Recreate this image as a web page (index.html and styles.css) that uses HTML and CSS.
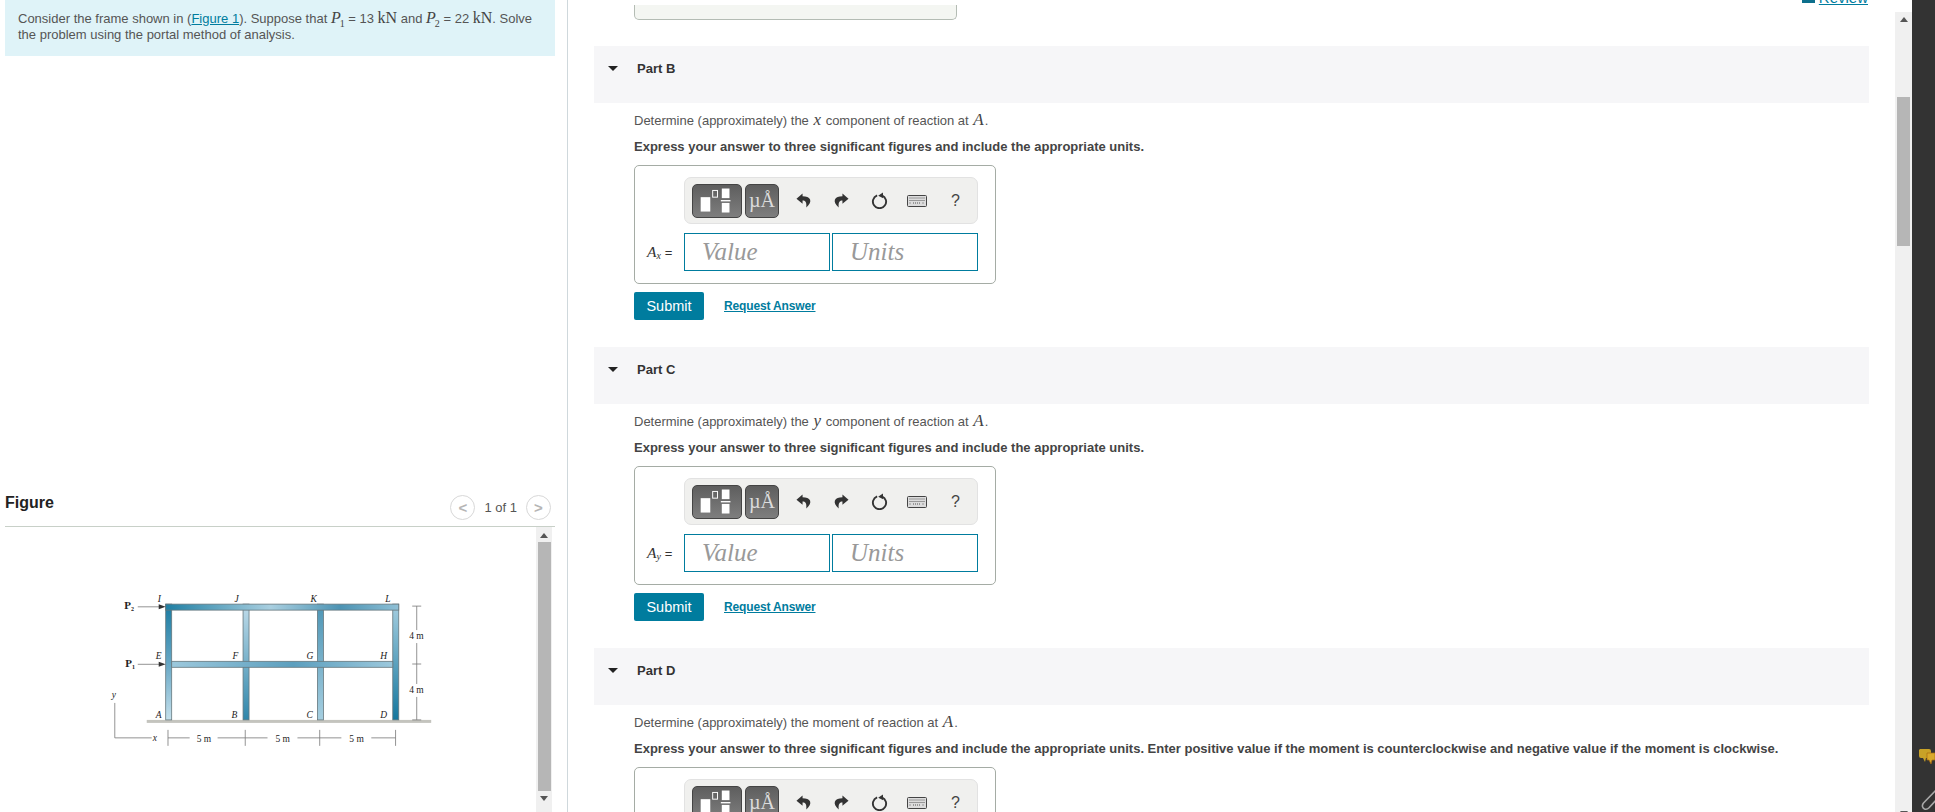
FILE: index.html
```html
<!DOCTYPE html>
<html lang="en">
<head>
  <meta charset="UTF-8" />
  <title>Portal method - Parts B to D</title>
  <link rel="stylesheet" href="styles.css">
</head>
<body>

  <svg class="defs">
    <defs>
      <linearGradient id="beamTop" x1="0" x2="1" y1="0" y2="0">
        <stop offset="0" stop-color="#1f7fa3" />
        <stop offset="0.45" stop-color="#a9cfe0" />
        <stop offset="0.75" stop-color="#4c93b3" />
        <stop offset="1" stop-color="#8fc0d6" />
      </linearGradient>
      <linearGradient id="beamMid" x1="0" x2="1" y1="0" y2="0">
        <stop offset="0" stop-color="#9cc8dc" />
        <stop offset="0.55" stop-color="#5c9fbe" />
        <stop offset="1" stop-color="#9cc8dc" />
      </linearGradient>
      <linearGradient id="colA" x1="0" x2="0" y1="0" y2="1">
        <stop offset="0" stop-color="#1a7ba1" />
        <stop offset="0.5" stop-color="#65a6c4" />
        <stop offset="1" stop-color="#c5e0ec" />
      </linearGradient>
      <linearGradient id="colB" x1="0" x2="0" y1="0" y2="1">
        <stop offset="0" stop-color="#c0dcea" />
        <stop offset="1" stop-color="#2f86aa" />
      </linearGradient>
      <linearGradient id="colC" x1="0" x2="0" y1="0" y2="1">
        <stop offset="0" stop-color="#4d95b5" />
        <stop offset="1" stop-color="#a5cee0" />
      </linearGradient>
      <linearGradient id="colD" x1="0" x2="0" y1="0" y2="1">
        <stop offset="0" stop-color="#a5cee0" />
        <stop offset="1" stop-color="#15779e" />
      </linearGradient>

      <symbol id="i-undo" viewBox="0 0 16 16">
        <path d="M7 0.500 L0.500 6 L7 11.500 V8 C10 8 11.500 9.500 11 15.500 C14.500 12.500 16 9.500 15 7 C14 4.500 11 3.500 7 3.500 Z" />
      </symbol>
      <symbol id="i-redo" viewBox="0 0 16 16">
        <path d="M9 0.500 L15.500 6 L9 11.500 V8 C6 8 4.500 9.500 5 15.500 C1.500 12.500 0 9.500 1 7 C2 4.500 5 3.500 9 3.500 Z" />
      </symbol>
      <symbol id="i-reset" viewBox="0 0 18 18">
        <path class="reset-arc" d="M6.500 3.600 A7 7 0 1 0 11.500 3.600" />
        <path d="M12.600 0.400 L12.900 6.600 L7.600 3.900 Z" />
      </symbol>
      <symbol id="i-keys" viewBox="0 0 20 12">
        <rect class="key-case" x="0.500" y="0.500" width="19" height="11" rx="1" />
        <path class="key-dots" d="M2.500 3h15M2.500 5.500h15M2.500 8h2M6 8h8M15.500 8h2" />
      </symbol>
      <symbol id="i-templ" viewBox="0 0 50 34">
        <rect x="8" y="13" width="10" height="15" fill="#fff" />
        <rect x="20.500" y="6" width="5" height="7" fill="none" stroke="#fff" stroke-width="1" />
        <rect x="30" y="4" width="8" height="10" fill="#fff" />
        <rect x="29" y="16" width="10" height="1.400" fill="#fff" />
        <rect x="30" y="19" width="8" height="10" fill="#fff" />
      </symbol>
    </defs>
  </svg>

  <div class="page">

    <!-- left: problem statement and figure -->
    <aside class="left">
      <div class="intro">
        Consider the frame shown in (<a href="#">Figure 1</a>). Suppose that
        <span class="m"><i>P</i><sub>1</sub></span> = 13 <span class="m">kN</span> and
        <span class="m"><i>P</i><sub>2</sub></span> = 22 <span class="m">kN</span>. Solve<br>
        the problem using the portal method of analysis.
      </div>

      <div class="fig-head">
        <h2>Figure</h2>
        <div class="fig-nav">
          <span class="circle">&lt;</span>
          <span class="fig-count">1 of 1</span>
          <span class="circle">&gt;</span>
        </div>
      </div>

      <div class="fig-body">
        <svg class="frame" width="532" height="285" viewBox="5 527 532 285">
          <rect class="ground" x="147" y="720" width="285" height="3" />

          <rect x="166" y="604" width="6" height="116" fill="url(#colA)" class="member" />
          <rect x="243.500" y="604" width="6" height="116" fill="url(#colB)" class="member" />
          <rect x="318" y="604" width="6" height="116" fill="url(#colC)" class="member" />
          <rect x="393.500" y="604" width="6" height="116" fill="url(#colD)" class="member" />
          <rect x="166" y="604" width="233.500" height="6" fill="url(#beamTop)" class="member" />
          <rect x="172" y="661.300" width="221.500" height="6" fill="url(#beamMid)" class="member" />

          <g class="lines">
            <path d="M138 606.700H160M138 664.300H160" />
            <path d="M115 703V738H152" />
            <path d="M168.300 730V746M245.700 730V746M320.300 730V746M396.300 730V746" />
            <path d="M168.300 738H190M218 738H245.700M245.700 738H268M298 738H320.300M320.300 738H342M372 738H396.300" />
            <path d="M417.500 606V630M417.500 643V684M417.500 697V720M413 606H422M413 664H422M413 720H422" />
          </g>
          <path class="head" d="M166 606.700l-7-2.500v5zM166 664.300l-7-2.500v5z" />

          <g class="lbl-i">
            <text x="158" y="602">I</text>
            <text x="235" y="602">J</text>
            <text x="311" y="602">K</text>
            <text x="386" y="602">L</text>
            <text x="156" y="659">E</text>
            <text x="233" y="659">F</text>
            <text x="307" y="659">G</text>
            <text x="381" y="659">H</text>
            <text x="156" y="718">A</text>
            <text x="232" y="718">B</text>
            <text x="307" y="718">C</text>
            <text x="381" y="718">D</text>
            <text x="112" y="698">y</text>
            <text x="153" y="741">x</text>
          </g>
          <g class="lbl-b">
            <text x="124.500" y="609">P<tspan class="lbl-sub" dy="2">2</tspan></text>
            <text x="125.500" y="667">P<tspan class="lbl-sub" dy="2">1</tspan></text>
          </g>
          <g class="lbl-r">
            <text x="197" y="742">5 m</text>
            <text x="276" y="742">5 m</text>
            <text x="350" y="742">5 m</text>
            <text x="410" y="639">4 m</text>
            <text x="410" y="693">4 m</text>
          </g>
        </svg>
        <div class="vscroll small">
          <span class="arr up"></span>
          <span class="thumb"></span>
          <span class="arr down"></span>
        </div>
      </div>
    </aside>

    <!-- right: the question parts -->
    <main class="right">
      <div class="review-row">
        <span class="review-icon"></span>
        <a href="#">Review</a>
      </div>
      <div class="stub"></div>

      <section class="part">
        <div class="part-head"><span class="caret"></span>Part B</div>
        <p>Determine (approximately) the <span class="m"><i>x</i></span> component of reaction at <span class="m"><i>A</i></span>.</p>
        <p class="strong">Express your answer to three significant figures and include the appropriate units.</p>
        <div class="answer-box">
          <div class="toolbar">
            <span class="tool wide"><svg width="50" height="34"><use href="#i-templ" /></svg></span>
            <span class="tool mu">&micro;&Aring;</span>
            <svg class="tb-icon undo"><use href="#i-undo" /></svg>
            <svg class="tb-icon redo"><use href="#i-redo" /></svg>
            <svg class="tb-icon reset"><use href="#i-reset" /></svg>
            <svg class="tb-keys"><use href="#i-keys" /></svg>
            <span class="tb-help">?</span>
          </div>
          <label class="ans-label"><i>A</i><sub><i>x</i></sub> <span class="eq">=</span></label>
          <div class="inputs">
            <input type="text" placeholder="Value" />
            <input type="text" placeholder="Units" />
          </div>
        </div>
        <div class="actions">
          <button type="button">Submit</button>
          <a href="#">Request Answer</a>
        </div>
      </section>

      <section class="part">
        <div class="part-head"><span class="caret"></span>Part C</div>
        <p>Determine (approximately) the <span class="m"><i>y</i></span> component of reaction at <span class="m"><i>A</i></span>.</p>
        <p class="strong">Express your answer to three significant figures and include the appropriate units.</p>
        <div class="answer-box">
          <div class="toolbar">
            <span class="tool wide"><svg width="50" height="34"><use href="#i-templ" /></svg></span>
            <span class="tool mu">&micro;&Aring;</span>
            <svg class="tb-icon undo"><use href="#i-undo" /></svg>
            <svg class="tb-icon redo"><use href="#i-redo" /></svg>
            <svg class="tb-icon reset"><use href="#i-reset" /></svg>
            <svg class="tb-keys"><use href="#i-keys" /></svg>
            <span class="tb-help">?</span>
          </div>
          <label class="ans-label"><i>A</i><sub><i>y</i></sub> <span class="eq">=</span></label>
          <div class="inputs">
            <input type="text" placeholder="Value" />
            <input type="text" placeholder="Units" />
          </div>
        </div>
        <div class="actions">
          <button type="button">Submit</button>
          <a href="#">Request Answer</a>
        </div>
      </section>

      <section class="part">
        <div class="part-head"><span class="caret"></span>Part D</div>
        <p>Determine (approximately) the moment of reaction at <span class="m"><i>A</i></span>.</p>
        <p class="strong">Express your answer to three significant figures and include the appropriate units. Enter positive value if the moment is counterclockwise and negative value if the moment is clockwise.</p>
        <div class="answer-box">
          <div class="toolbar">
            <span class="tool wide"><svg width="50" height="34"><use href="#i-templ" /></svg></span>
            <span class="tool mu">&micro;&Aring;</span>
            <svg class="tb-icon undo"><use href="#i-undo" /></svg>
            <svg class="tb-icon redo"><use href="#i-redo" /></svg>
            <svg class="tb-icon reset"><use href="#i-reset" /></svg>
            <svg class="tb-keys"><use href="#i-keys" /></svg>
            <span class="tb-help">?</span>
          </div>
          <label class="ans-label"><i>M</i><sub><i>A</i></sub> <span class="eq">=</span></label>
          <div class="inputs">
            <input type="text" placeholder="Value" />
            <input type="text" placeholder="Units" />
          </div>
        </div>
      </section>
    </main>

    <div class="vscroll big">
      <span class="arr up"></span>
      <span class="thumb"></span>
      <span class="arr down"></span>
    </div>

    <!-- dark tool strip on the right edge -->
    <div class="strip">
      <svg class="chat" width="16" height="20" viewBox="0 0 16 20">
        <path fill="#c9a227" d="M1 2h9a2 2 0 0 1 2 2v5a2 2 0 0 1-2 2H7l-1 4-2-4H2a2 2 0 0 1-2-2V3z" />
        <path fill="#d9a92a" stroke="#a86a10" stroke-width="0.700" d="M8 6h8v7h-3l-1 4-2-4H8z" />
      </svg>
      <svg class="clip" width="14" height="24" viewBox="0 0 14 24">
        <path fill="none" stroke="#a8a8a8" stroke-width="1.600" d="M15 3L2.500 16c-2 2.500-1 5 1 6 2 .8 3.500-.2 4.500-1.200L16 12" />
      </svg>
    </div>

  </div>

</body>
</html>
```

FILE: styles.css
```css
html, body {
  margin: 0;
  padding: 0;
  height: 100%;
  overflow: hidden;
  background: #fff;
}

body {
  font-family: 'Liberation Sans', Arial, sans-serif;
  font-size: 13px;
  color: #555;
}

a {
  color: #007c9e;
}

.defs {
  position: absolute;
  width: 0;
  height: 0;
}

.page {
  display: flex;
  height: 812px;
  overflow: hidden;
}

/* left column */

.left {
  width: 550px;
  flex: none;
  padding: 0 12px 0 5px;
  border-right: 1px solid #cfd8dc;
}

.intro {
  height: 56px;
  box-sizing: border-box;
  padding: 11px 0 0 13px;
  line-height: 16px;
  background: #dff3f8;
}

.m {
  font-family: 'Liberation Serif', serif;
  font-size: 16px;
  line-height: 0;
  color: #444;
}

.m sub {
  font-size: 10px;
  line-height: 0;
  margin-left: -1px;
}

.part .m {
  font-size: 17px;
  margin: 0 1px;
}

.fig-head {
  display: flex;
  align-items: flex-start;
  justify-content: space-between;
  height: 33px;
  margin-top: 437px;
  border-bottom: 1px solid #c8d0c8;
}

.fig-head h2 {
  margin: 1px 0 0;
  font-size: 16px;
  line-height: 18px;
  color: #222;
}

.fig-nav {
  display: flex;
  align-items: center;
  gap: 9px;
  margin: 2px 4px 0 0;
  color: #555;
  font-size: 13px;
}

.circle {
  display: flex;
  align-items: center;
  justify-content: center;
  width: 23px;
  height: 23px;
  border: 1px solid #d8d8d8;
  border-radius: 50%;
  font-weight: bold;
  font-size: 15px;
  color: #b5b5b5;
}

.fig-body {
  display: flex;
  justify-content: space-between;
  height: 285px;
  padding-right: 3px;
}

.frame {
  display: block;
}

.ground {
  fill: #c4c4be;
}

.member {
  stroke: #66777d;
  stroke-width: 0.800;
}

.lines {
  fill: none;
  stroke: #777;
  stroke-width: 0.800;
}

.head {
  fill: #333;
}

.frame text {
  font-family: 'Liberation Serif', serif;
  font-size: 9.500px;
  fill: #222;
}

.lbl-i text {
  font-style: italic;
}

.lbl-b text {
  font-weight: bold;
  font-size: 11px;
}

.lbl-sub {
  font-size: 6px;
}

/* scrollbars */

.vscroll {
  display: flex;
  flex-direction: column;
  align-items: center;
  flex: none;
  background: #f0f0f0;
}

.vscroll.small {
  width: 16px;
}

.vscroll.big {
  width: 17px;
  margin-top: 12px;
}

.thumb {
  display: block;
  background: #b6b6b6;
}

.small .thumb {
  width: 13px;
  height: 249px;
}

.big .thumb {
  width: 13px;
  height: 149px;
  margin-bottom: auto;
}

.arr {
  display: block;
  width: 0;
  height: 0;
  border-left: 4px solid transparent;
  border-right: 4px solid transparent;
}

.arr.up {
  margin: 6px 0 4px;
  border-bottom: 5px solid #555;
}

.arr.down {
  margin: 5px 0 4px;
  border-top: 5px solid #555;
}

.big .arr.up {
  margin: 5px 0 75px;
}

.big .arr.down {
  margin: 0 0 -4px;
}

/* right column */

.right {
  flex: 1;
  min-width: 0;
  overflow: hidden;
}

.review-row {
  display: flex;
  align-items: flex-end;
  justify-content: flex-end;
  gap: 4px;
  height: 5px;
  margin-right: 27px;
  overflow: hidden;
  font-size: 15px;
  line-height: 14px;
}

.review-icon {
  width: 13px;
  height: 14px;
  margin-bottom: 2px;
  background: #0d6f8c;
}

.stub {
  width: 321px;
  height: 14px;
  margin: 0 0 26px 66px;
  border: 1px solid #b4bcb4;
  border-top: 0;
  border-radius: 0 0 5px 5px;
  background: #f4f6f2;
}

.part {
  margin: 0 26px 27px;
}

.part-head {
  display: flex;
  align-items: center;
  box-sizing: border-box;
  height: 57px;
  padding: 0 0 12px 43px;
  background: #f6f6f8;
  font-weight: bold;
  color: #333;
  position: relative;
}

.caret {
  position: absolute;
  left: 14px;
  top: 20px;
  border-left: 5px solid transparent;
  border-right: 5px solid transparent;
  border-top: 5px solid #222;
}

.part p {
  margin: 10px 0 0 40px;
  line-height: 16px;
}

.part p.strong {
  font-weight: bold;
  color: #444;
}

.answer-box {
  display: inline-grid;
  grid-template-columns: auto auto;
  column-gap: 6px;
  row-gap: 9px;
  margin: 10px 0 0 40px;
  padding: 11px 17px 12px 12px;
  border: 1px solid #a5aca5;
  border-radius: 5px;
  background: #fff;
}

.toolbar {
  grid-column: 2;
  display: flex;
  align-items: center;
  box-sizing: border-box;
  width: 294px;
  height: 47px;
  padding-left: 7px;
  border: 1px solid #e2e2e2;
  border-radius: 7px;
  background: #f0f0ee;
}

.tool {
  display: flex;
  align-items: center;
  justify-content: center;
  box-sizing: border-box;
  height: 34px;
  border: 1px solid #444;
  border-radius: 5px;
  background: linear-gradient(#5e5e5e, #7e7e7e);
}

.tool.wide {
  width: 50px;
}

.tool.mu {
  width: 34px;
  margin-left: 3px;
  font-family: 'Liberation Serif', serif;
  font-size: 20px;
  color: #dcdcdc;
}

.tb-icon {
  width: 15px;
  height: 15px;
  fill: #333;
  flex: none;
}

.undo {
  margin-left: 17px;
}

.redo {
  margin-left: 23px;
}

.reset {
  margin-left: 22px;
  width: 17px;
  height: 17px;
}

.reset-arc {
  fill: none;
  stroke: #333;
  stroke-width: 2;
}

.tb-keys {
  width: 20px;
  height: 12px;
  margin-left: 19px;
  flex: none;
}

.key-case {
  fill: #dcdcdc;
  stroke: #444;
}

.key-dots {
  fill: none;
  stroke: #555;
  stroke-width: 1;
  stroke-dasharray: 1 1;
}

.tb-help {
  margin-left: 24px;
  font-size: 16px;
  color: #444;
}

.ans-label {
  align-self: center;
  min-width: 31px;
  font-family: 'Liberation Serif', serif;
  font-size: 15.500px;
  color: #333;
  white-space: nowrap;
}

.ans-label sub {
  font-size: 10px;
  line-height: 0;
  vertical-align: -2px;
}

.eq {
  font-family: 'Liberation Sans', sans-serif;
  font-size: 13px;
}

.inputs {
  display: flex;
  gap: 2px;
}

.inputs input {
  box-sizing: border-box;
  width: 146px;
  height: 38px;
  padding: 0 0 0 17px;
  border: 1px solid #007c9e;
  border-radius: 0;
  font-family: 'Liberation Serif', serif;
  font-style: italic;
  font-size: 25px;
  background: #fff;
}

.inputs input::placeholder {
  color: #999;
  opacity: 1;
}

.actions {
  display: flex;
  align-items: center;
  gap: 20px;
  margin: 8px 0 0 40px;
}

.actions button {
  width: 70px;
  height: 28px;
  padding: 0;
  border: 0;
  border-radius: 2px;
  background: #007c9e;
  color: #fff;
  font-family: inherit;
  font-size: 14.500px;
}

.actions a {
  font-size: 12px;
  font-weight: bold;
  letter-spacing: -0.150px;
}

/* dark strip */

.strip {
  width: 23px;
  flex: none;
  display: flex;
  flex-direction: column;
  align-items: flex-end;
  background: #333;
}

.chat {
  margin-top: 747px;
  margin-right: 0;
}

.clip {
  margin-top: 20px;
}
```
